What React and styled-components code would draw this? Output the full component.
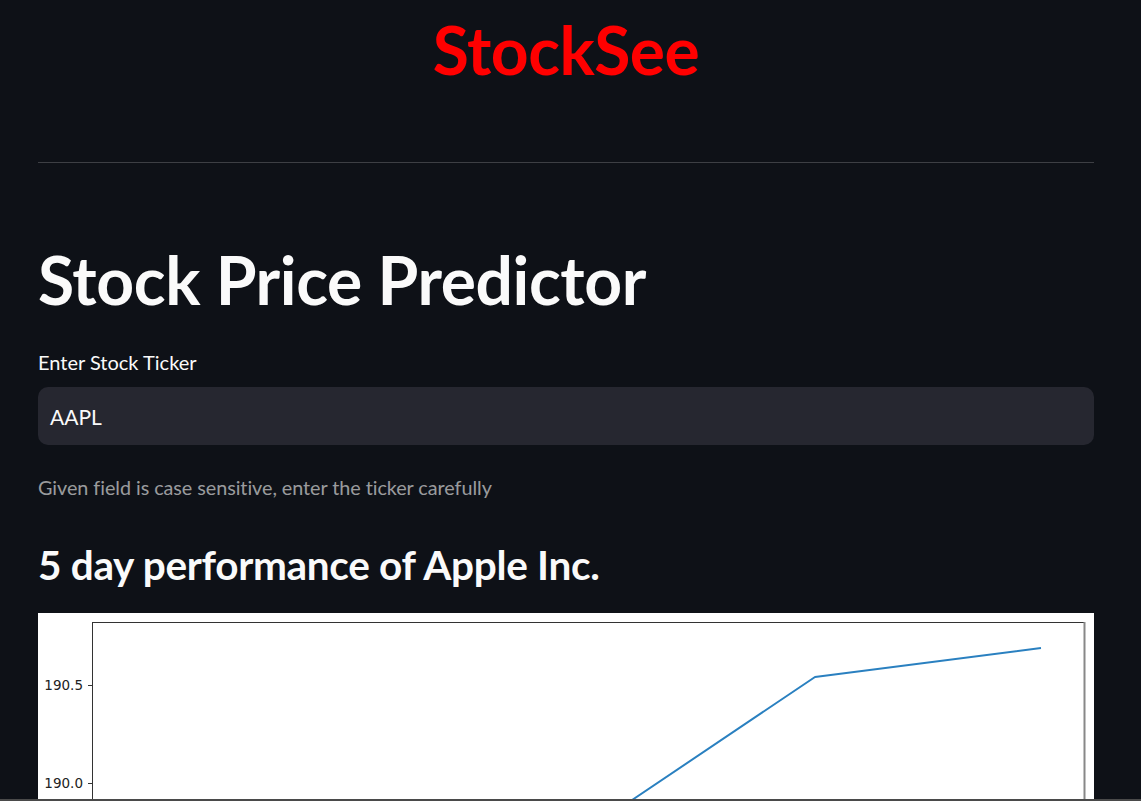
import React from "react";
import styled, { createGlobalStyle } from "styled-components";

const Global = createGlobalStyle`
  html, body { margin: 0; padding: 0; background: #0e1117; }
  body { font-family: "Lato", "Noto Sans", sans-serif; color: #fafafa; overflow: hidden; }
  * { box-sizing: border-box; }
`;

const Page = styled.main`
  padding: 0 47px 0 38px;
  display: flex;
  flex-direction: column;
`;

const Brand = styled.h1`
  margin: 0;
  padding-top: 12px;
  text-align: center;
  color: #ff0000;
  font-size: 66px;
  line-height: 76px;
  font-weight: 700;
  letter-spacing: -0.5px;
`;

const Divider = styled.hr`
  margin: 74px 0 0;
  border: none;
  height: 1px;
  background: rgba(250, 250, 250, 0.2);
`;

const Title = styled.h1`
  margin: 79px 0 0;
  font-size: 66px;
  line-height: 76px;
  font-weight: 700;
  letter-spacing: -0.4px;
`;

const Label = styled.label`
  display: block;
  margin-top: 31px;
  font-size: 20px;
  line-height: 26px;
`;

const Input = styled.div`
  margin-top: 12px;
  height: 58px;
  border-radius: 10px;
  background: #262730;
  display: flex;
  align-items: center;
  padding: 0 12px;
  font-size: 21px;
`;

const Help = styled.p`
  margin: 29px 0 0;
  font-size: 19.8px;
  line-height: 26px;
  letter-spacing: -0.05px;
  color: rgba(250, 250, 250, 0.6);
`;

const Subtitle = styled.h3`
  margin: 41px 0 0;
  font-size: 40.5px;
  line-height: 48px;
  font-weight: 700;
  letter-spacing: -0.3px;
`;

const ChartBox = styled.div`
  margin-top: 24px;
  background: #ffffff;
  height: 700px;
`;

const ScrollEdge = styled.div`
  position: fixed;
  left: 0;
  right: 0;
  bottom: 0;
  height: 2px;
  background: #4a4a4a;
`;

const TickLabel = styled.text`
  font-family: "DejaVu Sans", sans-serif;
  font-size: 13.5px;
  fill: #222;
`;

function Chart() {
  return (
    <ChartBox>
      <svg width="1056" height="700" viewBox="0 0 1056 700">
        <rect x="54.5" y="9.5" width="992" height="700" fill="none" stroke="#333" strokeWidth="1" />
        <line x1="1046.5" y1="9" x2="1046.5" y2="700" stroke="#888" strokeWidth="2" />
        <line x1="50" y1="72.5" x2="54" y2="72.5" stroke="#333" />
        <line x1="50" y1="170.5" x2="54" y2="170.5" stroke="#333" />
        <TickLabel x="45" y="77" textAnchor="end">190.5</TickLabel>
        <TickLabel x="45" y="175" textAnchor="end">190.0</TickLabel>
        <polyline
          points="99,450 325,330 551,216 777,64 1003,35"
          fill="none"
          stroke="#2a80c0"
          strokeWidth="2"
          strokeLinejoin="round"
        />
      </svg>
    </ChartBox>
  );
}

export default function App() {
  return (
    <>
      <Global />
      <Page>
        <Brand>StockSee</Brand>
        <Divider />
        <Title>Stock Price Predictor</Title>
        <Label>Enter Stock Ticker</Label>
        <Input>AAPL</Input>
        <Help>Given field is case sensitive, enter the ticker carefully</Help>
        <Subtitle>5 day performance of Apple Inc.</Subtitle>
        <Chart />
      </Page>
      <ScrollEdge />
    </>
  );
}
